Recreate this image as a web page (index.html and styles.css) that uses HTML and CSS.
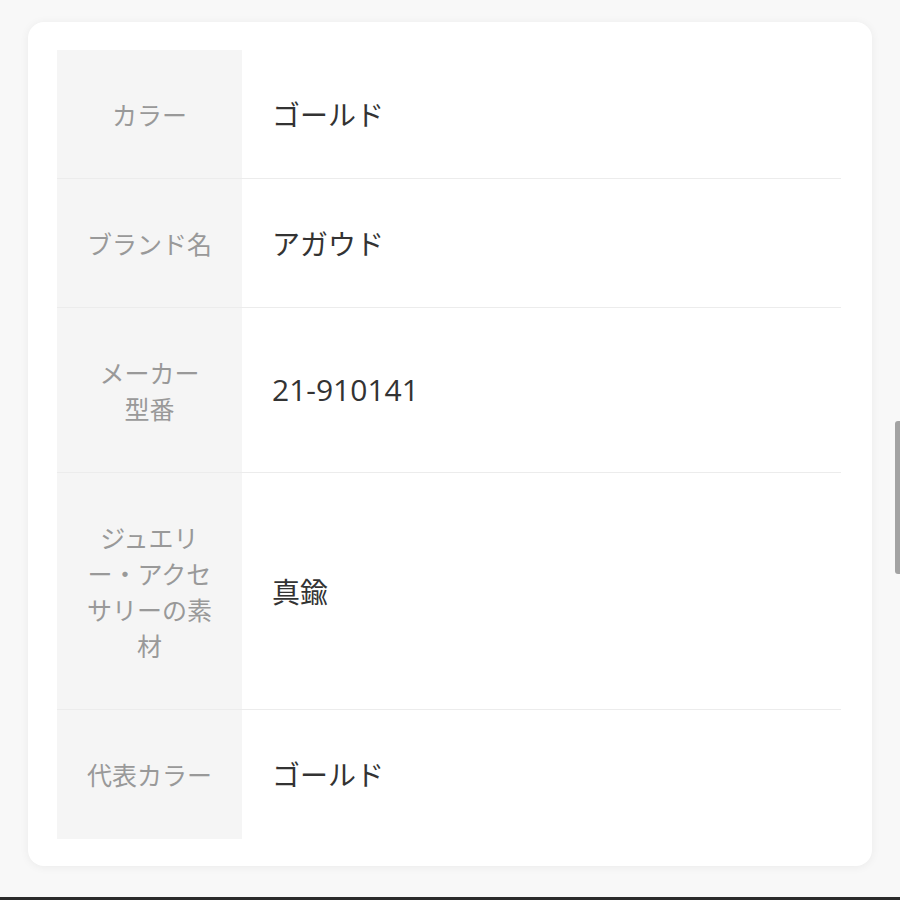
FILE: index.html
```html
<!DOCTYPE html>
<html lang="ja">
<head>
<meta charset="utf-8">
<link rel="stylesheet" href="styles.css">
</head>
<body>
<div class="page">
  <main class="main">
    <section class="card">
      <table class="spec">
        <tbody>
          <tr>
            <th>カラー</th>
            <td>ゴールド</td>
          </tr>
          <tr>
            <th>ブランド名</th>
            <td>アガウド</td>
          </tr>
          <tr>
            <th>メーカー<br>型番</th>
            <td class="num">21-910141</td>
          </tr>
          <tr>
            <th>ジュエリ<br>ー・アクセ<br>サリーの素<br>材</th>
            <td>真鍮</td>
          </tr>
          <tr>
            <th>代表カラー</th>
            <td>ゴールド</td>
          </tr>
        </tbody>
      </table>
    </section>
  </main>
  <div class="bottom-bar"></div>
  <div class="scroll-thumb"></div>
</div>
</body>
</html>
```

FILE: styles.css
```css
html, body {
  margin: 0;
  padding: 0;
}
body {
  background: #f8f8f8;
  font-family: "Noto Sans CJK JP", "Noto Sans", sans-serif;
}
.page {
  position: relative;
  height: 900px;
  display: flex;
  flex-direction: column;
  overflow: hidden;
}
.main {
  flex: 1;
  padding: 22px 28px 0 28px;
}
.card {
  background: #ffffff;
  border-radius: 16px;
  box-shadow: 0 1px 10px rgba(0, 0, 0, 0.06);
  padding: 28px 31px 27px 29px;
}
.spec {
  width: 100%;
  border-collapse: collapse;
}
.spec th,
.spec td {
  border-bottom: 1px solid #ececec;
  padding: 46px 0;
  line-height: 36px;
  vertical-align: middle;
}
.spec tr:last-child th,
.spec tr:last-child td {
  border-bottom: 1px solid transparent;
}
.spec th {
  width: 129px;
  padding-left: 28px;
  padding-right: 28px;
  background: #f5f5f5;
  color: #999999;
  font-size: 25px;
  font-weight: 400;
  text-align: center;
}
.spec td {
  padding-left: 30px;
  color: #333333;
  font-size: 28px;
  text-align: left;
}
.spec td.num {
  font-family: "Open Sans", "Noto Sans CJK JP", sans-serif;
  font-size: 30px;
}
.bottom-bar {
  height: 3px;
  background: #2b2b2b;
}
.scroll-thumb {
  position: absolute;
  right: 0;
  top: 421px;
  width: 5px;
  height: 153px;
  background: #a3a3a3;
  border-radius: 3px 0 0 3px;
}
```
